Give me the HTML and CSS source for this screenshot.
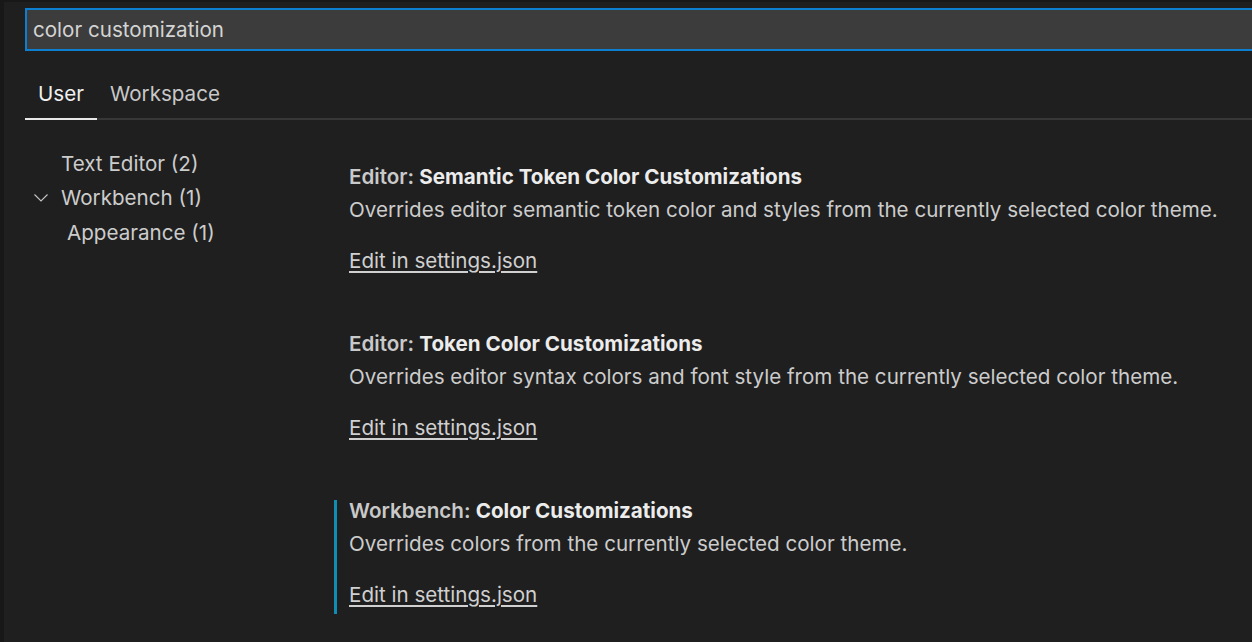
FILE: index.html
```html
<!DOCTYPE html>
<html lang="en">
<head>
<meta charset="utf-8">
<title>Settings</title>
<link rel="stylesheet" href="styles.css">
</head>
<body>
<div class="app">
  <div class="search">
    <span class="search-text">color customization</span>
  </div>
  <div class="tabs">
    <div class="tab active">User</div>
    <div class="tab">Workspace</div>
  </div>
  <div class="body">
    <nav class="toc">
      <div class="toc-row"><span class="twisty"></span><span class="toc-label">Text Editor (2)</span></div>
      <div class="toc-row"><span class="twisty"><svg width="14" height="8" viewBox="0 0 14 8"><path d="M0.5 0.5 L7 7 L13.5 0.5" fill="none" stroke="#c5c5c5" stroke-width="1.1"/></svg></span><span class="toc-label">Workbench (1)</span></div>
      <div class="toc-row sub"><span class="twisty"></span><span class="toc-label">Appearance (1)</span></div>
    </nav>
    <main class="settings">
      <section class="setting">
        <div class="title"><span class="cat">Editor: </span><span class="label">Semantic Token Color Customizations</span></div>
        <div class="desc">Overrides editor semantic token color and styles from the currently selected color theme.</div>
        <a class="link" href="#">Edit in settings.json</a>
      </section>
      <section class="setting">
        <div class="title"><span class="cat">Editor: </span><span class="label">Token Color Customizations</span></div>
        <div class="desc">Overrides editor syntax colors and font style from the currently selected color theme.</div>
        <a class="link" href="#">Edit in settings.json</a>
      </section>
      <section class="setting focused">
        <div class="title"><span class="cat">Workbench: </span><span class="label">Color Customizations</span></div>
        <div class="desc">Overrides colors from the currently selected color theme.</div>
        <a class="link" href="#">Edit in settings.json</a>
      </section>
    </main>
  </div>
</div>
</body>
</html>
```

FILE: styles.css
```css
html, body {
  margin: 0;
  padding: 0;
  background: #1f1f1f;
  overflow: hidden;
}
body {
  font-family: Inter, "Noto Sans", sans-serif;
  font-size: 20.6px;
  color: #cccccc;
}
.app {
  width: 1248px;
  height: 640px;
  border-left: 4px solid #181818;
  border-top: 2px solid #181818;
  padding-top: 6px;
  box-sizing: content-box;
}
.search {
  margin-left: 21px;
  height: 39px;
  background: #3c3c3c;
  border: 2px solid #0c7fd0;
  border-right: none;
  display: flex;
  align-items: center;
  padding-left: 6px;
}
.search-text {
  color: #d4d4d4;
}
.tabs {
  margin-left: 21px;
  margin-top: 23px;
  display: flex;
  border-bottom: 2px solid #373737;
  height: 44px;
}
.tab {
  padding: 0 13px 4px;
  line-height: 40px;
  color: #c8c8c8;
  margin-bottom: -2px;
  border-bottom: 2px solid transparent;
}
.tab.active {
  color: #f0f0f0;
  border-bottom-color: #e8e8e8;
}
.body {
  display: flex;
}
.toc {
  width: 330px;
  padding-top: 26px;
  flex-shrink: 0;
}
.toc-row {
  display: flex;
  align-items: center;
  height: 34.5px;
  padding-left: 28px;
}
.twisty {
  width: 29px;
  display: flex;
  align-items: center;
  padding-left: 2px;
  box-sizing: border-box;
}
.toc-row.sub .toc-label {
  margin-left: 6px;
}
.toc-label {
  color: #cccccc;
}
.settings {
  padding-top: 46px;
  display: flex;
  flex-direction: column;
  gap: 53px;
}
.setting {
  border-left: 3px solid transparent;
  padding: 0 0 7px 12px;
}
.setting.focused {
  border-left-color: #0f8db3;
}
.title {
  line-height: 22px;
  font-weight: 600;
}
.cat {
  color: #c9c9c9;
}
.label {
  color: #ececec;
  font-weight: 700;
}
.desc {
  margin-top: 10px;
  line-height: 24px;
  color: #cccccc;
}
.link {
  display: inline-block;
  margin-top: 27px;
  line-height: 24px;
  color: #d0d0d0;
  text-decoration: underline;
  text-underline-offset: 3px;
}
```
